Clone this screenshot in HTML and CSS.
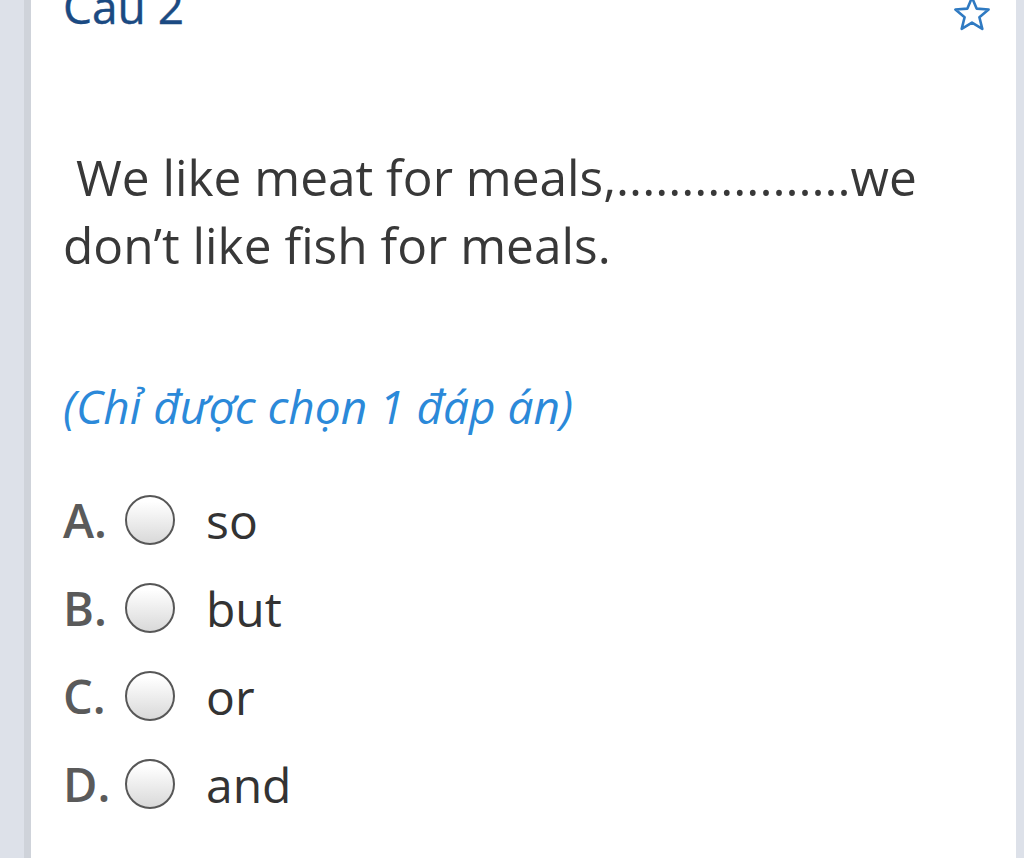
FILE: index.html
```html
<!DOCTYPE html>
<html lang="vi">
<head>
<meta charset="utf-8">
<title>Câu 2</title>
<link rel="stylesheet" href="styles.css">
</head>
<body>
<div class="page">
  <div class="card">
    <div class="card-head">
      <h2 class="title">Câu 2</h2>
      <svg class="star" viewBox="0 0 40 38" width="40" height="38" aria-hidden="true">
        <path d="M20 2.5 L24.6 13.6 L36.6 14.5 L27.4 22.2 L30.3 33.9 L20 27.6 L9.7 33.9 L12.6 22.2 L3.4 14.5 L15.4 13.6 Z" fill="none" stroke="#2f7ac2" stroke-width="2.6" stroke-linejoin="round"/>
      </svg>
    </div>
    <p class="question">&nbsp;We like meat for meals,..................we don’t like fish for meals.</p>
    <p class="hint">(Chỉ được chọn 1 đáp án)</p>
    <ul class="options">
      <li class="option"><span class="opt-label">A.</span><span class="radio"></span><span class="opt-text">so</span></li>
      <li class="option"><span class="opt-label">B.</span><span class="radio"></span><span class="opt-text">but</span></li>
      <li class="option"><span class="opt-label">C.</span><span class="radio"></span><span class="opt-text">or</span></li>
      <li class="option"><span class="opt-label">D.</span><span class="radio"></span><span class="opt-text">and</span></li>
    </ul>
  </div>
</div>
</body>
</html>
```

FILE: styles.css
```css
html, body {
  margin: 0;
  padding: 0;
  height: 100%;
  overflow: hidden;
}
body {
  background: #dde1e9;
  font-family: "Open Sans", "Noto Sans", sans-serif;
}
.page {
  display: flex;
  height: 100%;
  padding-left: 24px;
  padding-right: 8px;
}
.card {
  flex: 1;
  display: flex;
  flex-direction: column;
  background: #fff;
  border-left: 7px solid #cfd3da;
  padding: 0 32px 0 32px;
}
.card-head {
  display: flex;
  justify-content: space-between;
  align-items: flex-start;
  margin-top: -24px;
  height: 58px;
}
.title {
  margin: 0;
  font-size: 46px;
  line-height: 60px;
  font-weight: 400;
  color: #1b4a82;
  -webkit-text-stroke: 0.4px #1b4a82;
}
.star {
  margin-top: 19px;
  margin-right: -8px;
}
.question {
  margin: 109px 0 0 0;
  font-size: 49.6px;
  line-height: 68px;
  color: #383838;
}
.hint {
  margin: 99px 0 0 0;
  font-size: 46px;
  line-height: 56px;
  font-style: italic;
  color: #2b89d9;
}
.options {
  list-style: none;
  margin: 42px 0 0 0;
  padding: 0;
}
.option {
  display: flex;
  align-items: center;
  height: 88px;
}
.opt-label {
  width: 62px;
  font-size: 47px;
  font-weight: 600;
  color: #5a5a5a;
}
.radio {
  width: 46px;
  height: 46px;
  border: 2.5px solid #575757;
  border-radius: 50%;
  background: linear-gradient(#ffffff 10%, #d9d9d9 100%);
  flex: none;
}
.opt-text {
  margin-left: 31px;
  font-size: 48px;
  color: #333;
}
```
